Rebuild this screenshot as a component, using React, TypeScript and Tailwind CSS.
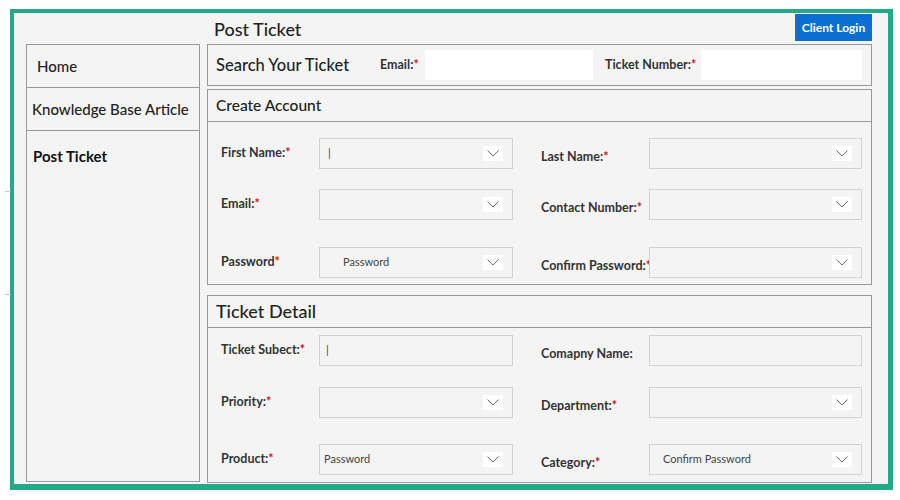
import React from "react";

const FONT = { fontFamily: 'Lato, "Noto Sans", sans-serif' };

function Chevron() {
  return (
    <div className="w-[20px] h-[15px] bg-white flex items-center justify-center mr-[9px]">
      <svg width="12" height="7" viewBox="0 0 12 7" fill="none">
        <path d="M0.5 0.5 L6 6 L11.5 0.5" stroke="#6b6b6b" strokeWidth="1" />
      </svg>
    </div>
  );
}

function Box({ w, value, chevron = true, valuePad = "pl-[8px]" }: { w: string; value?: string; chevron?: boolean; valuePad?: string }) {
  return (
    <div className={`${w} h-[31px] shrink-0 border border-[#d2d2d2] bg-[#f4f4f4] flex items-center justify-between`}>
      <span className={`${valuePad} text-[11px] text-[#444]`}>{value ?? ""}</span>
      {chevron ? <Chevron /> : null}
    </div>
  );
}

function Label({ text, req = true, w, shift = false }: { text: string; req?: boolean; w: string; shift?: boolean }) {
  return (
    <div className={`${w} shrink-0 whitespace-nowrap text-[12.5px] font-bold text-[#333] ${shift ? "pt-[8px]" : ""}`}>
      {text}
      {req ? <span className="text-[#d0141c]">*</span> : null}
    </div>
  );
}

type F = { label: string; req?: boolean; value?: string; chevron?: boolean; pad?: string };

function Row({ l, r, mt }: { l: F; r: F; mt: string }) {
  return (
    <div className={`flex items-center shrink-0 pl-[13px] ${mt}`}>
      <Label text={l.label} req={l.req} w="w-[98px]" />
      <Box w="w-[194px]" value={l.value} chevron={l.chevron} valuePad={l.pad} />
      <div className="w-[28px] shrink-0" />
      <Label text={r.label} req={r.req} w="w-[108px]" shift />
      <Box w="w-[213px]" value={r.value} chevron={r.chevron} valuePad={r.pad} />
    </div>
  );
}

export default function App() {
  return (
    <div className="w-[900px] h-[500px] bg-white pt-[9px] pl-[10px] relative" style={FONT}>
      <div className="absolute left-[5px] top-[191px] w-[6px] h-px bg-[#c8c8c8]" />
      <div className="absolute left-[5px] top-[294px] w-[6px] h-px bg-[#c8c8c8]" />
      <div className="w-[883px] h-[481px] border-[#24a886] border-t-4 border-l-4 border-r-[5px] border-b-[6px] bg-[#f4f4f4] flex flex-col">
        <div className="h-[31px] shrink-0 flex items-center pl-[200px] pr-[16px] justify-between">
          <div className="text-[18px] font-medium text-[#222] pt-[2px]">Post Ticket</div>
          <div className="self-start mt-[1px] h-[27px] w-[77px] bg-[#0b6fd1] text-white text-[12px] font-bold flex items-center justify-center">
            Client Login
          </div>
        </div>
        <div className="flex pl-[12px] gap-[7px]">
          <div className="w-[174px] h-[438px] shrink-0 border border-[#999] flex flex-col text-[#222]">
            <div className="h-[43px] shrink-0 border-b border-[#999] flex items-center pl-[10px] text-[15px] font-medium">Home</div>
            <div className="h-[43px] shrink-0 border-b border-[#999] flex items-center pl-[5px] text-[15px] font-medium whitespace-nowrap">Knowledge Base Article</div>
            <div className="pl-[6px] pt-[14px] text-[15px] font-bold text-[#111]">Post Ticket</div>
          </div>
          <div className="w-[665px] flex flex-col">
            <div className="h-[42px] shrink-0 border border-[#999] flex items-center pl-[8px]">
              <div className="w-[164px] shrink-0 text-[16.5px] font-medium text-[#222] whitespace-nowrap">Search Your Ticket</div>
              <Label text="Email:" w="w-[45px]" />
              <div className="w-[168px] h-[30px] bg-white shrink-0" />
              <div className="w-[12px] shrink-0" />
              <Label text="Ticket Number:" w="w-[96px]" />
              <div className="w-[161px] h-[30px] bg-white shrink-0" />
            </div>
            <div className="mt-[3px] h-[196px] shrink-0 border border-[#999] flex flex-col">
              <div className="h-[32px] shrink-0 border-b border-[#999] flex items-center pl-[8px] text-[15.5px] font-medium text-[#222]">
                Create Account
              </div>
              <Row mt="mt-[16px]" l={{ label: "First Name:", value: "|", pad: "pl-[8px]" }} r={{ label: "Last Name:" }} />
              <Row mt="mt-[20px]" l={{ label: "Email:" }} r={{ label: "Contact Number:" }} />
              <Row mt="mt-[27px]" l={{ label: "Password", value: "Password", pad: "pl-[23px]" }} r={{ label: "Confirm Password:" }} />
            </div>
            <div className="mt-[10px] h-[188px] shrink-0 border border-[#999] flex flex-col">
              <div className="h-[32px] shrink-0 border-b border-[#999] flex items-center pl-[8px] text-[18px] font-medium text-[#222]">
                Ticket Detail
              </div>
              <Row mt="mt-[7px]" l={{ label: "Ticket Subect:", value: "|", chevron: false, pad: "pl-[6px]" }} r={{ label: "Comapny Name:", req: false, chevron: false }} />
              <Row mt="mt-[21px]" l={{ label: "Priority:" }} r={{ label: "Department:" }} />
              <Row mt="mt-[26px]" l={{ label: "Product:", value: "Password", pad: "pl-[4px]" }} r={{ label: "Category:", value: "Confirm Password", pad: "pl-[13px]" }} />
            </div>
          </div>
        </div>
      </div>
    </div>
  );
}
